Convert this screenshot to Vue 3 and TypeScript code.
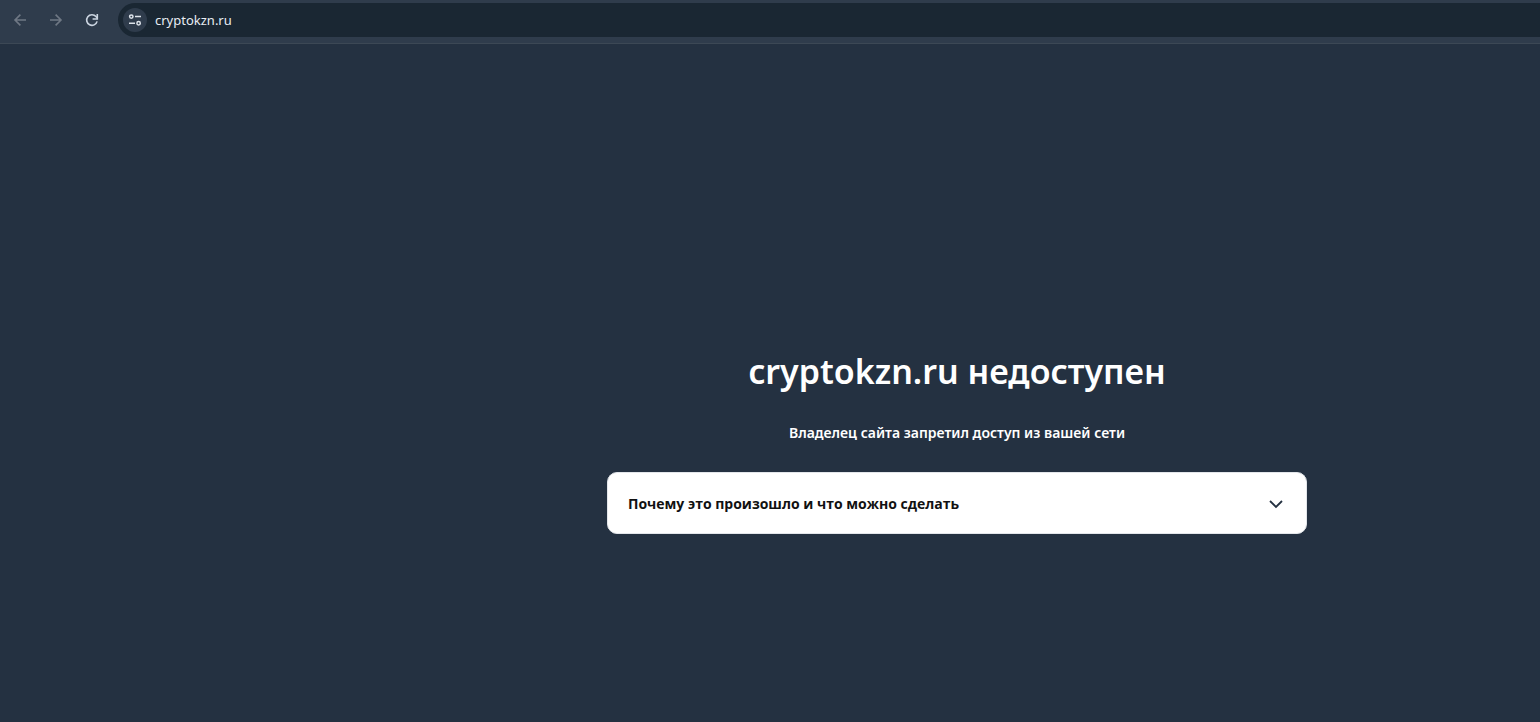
<script setup lang="ts">
import { ref } from 'vue'

const host = ref<string>('cryptokzn.ru')
</script>

<template>
  <div class="window">
    <header class="toolbar">
      <button class="nav" type="button" aria-label="Назад" disabled>
        <svg viewBox="0 0 16 16" width="16" height="16"><path d="M14 8H3.4M8.4 2.6L3 8L8.4 13.4" /></svg>
      </button>
      <button class="nav" type="button" aria-label="Вперёд" disabled>
        <svg viewBox="0 0 16 16" width="16" height="16"><path d="M2 8H12.6M7.6 2.6L13 8L7.6 13.4" /></svg>
      </button>
      <button class="nav reload" type="button" aria-label="Обновить">
        <svg viewBox="0 0 16 16" width="16" height="16">
          <path d="M13.1 9.4A5.3 5.3 0 1 1 12 4.6L13 5.8" />
          <path d="M13.3 2V7H8.6" />
        </svg>
      </button>
      <div class="address">
        <button class="site-info" type="button" aria-label="Сведения о сайте">
          <svg viewBox="0 0 16 16" width="16" height="16">
            <circle cx="4.3" cy="4.6" r="1.7" />
            <path d="M8 4.6H14M2 11.3H8" />
            <circle cx="11.6" cy="11.3" r="1.7" />
          </svg>
        </button>
        <input v-model="host" class="url" type="text" aria-label="Адрес" />
      </div>
    </header>
    <main class="page">
      <section class="notice">
        <h1>cryptokzn.ru недоступен</h1>
        <p>Владелец сайта запретил доступ из вашей сети</p>
        <button class="card" type="button" aria-expanded="false">
          <span>Почему это произошло и что можно сделать</span>
          <svg viewBox="0 0 16 16" width="16" height="16"><path d="M2 5L8 11L14 5" /></svg>
        </button>
      </section>
    </main>
  </div>
</template>

<style>
body {
  margin: 0;
  background: #243141;
}
</style>

<style scoped>
.window {
  display: flex;
  flex-direction: column;
  min-height: 100vh;
  overflow: hidden;
  background: #243141;
  font-family: "Segoe UI", "Noto Sans", "Open Sans", sans-serif;
}
button {
  margin: 0;
  padding: 0;
  border: 0;
  background: none;
  font: inherit;
}
svg {
  display: block;
  flex: none;
  fill: none;
  stroke: currentColor;
}
.toolbar {
  display: flex;
  align-items: center;
  gap: 8px;
  padding: 3px 0 6px 6px;
  border-bottom: 1px solid #3c4855;
  background: #2f3c4c;
}
.nav {
  display: flex;
  align-items: center;
  justify-content: center;
  width: 28px;
  height: 28px;
  color: #6f7884;
  stroke-width: 1.6;
}
.reload {
  color: #ccd5e1;
  stroke-width: 1.6;
}
.address {
  display: flex;
  flex: 1;
  align-items: center;
  gap: 8px;
  height: 34px;
  margin-left: 4px;
  padding-left: 5px;
  border-radius: 17px 0 0 17px;
  background: #1a2733;
}
.site-info {
  display: flex;
  align-items: center;
  justify-content: center;
  width: 24px;
  height: 24px;
  border-radius: 50%;
  background: #2f3c4c;
  color: #dde3ea;
  stroke-width: 1.5;
}
.url {
  flex: 1;
  min-width: 0;
  padding: 0;
  border: 0;
  outline: 0;
  background: none;
  color: #e8edf3;
  font-family: inherit;
  font-size: 13px;
  line-height: 20px;
}
.page {
  display: flex;
  flex: 1;
  justify-content: center;
  padding: 300px 0 0 374px;
}
.notice {
  display: flex;
  flex-direction: column;
  align-items: center;
  width: 100%;
  max-width: 700px;
}
h1 {
  margin: 0;
  color: #fff;
  font-size: 34px;
  font-weight: 600;
  line-height: 54px;
}
p {
  margin: 24px 0 28px;
  color: #fff;
  font-size: 14px;
  font-weight: 600;
  line-height: 22px;
}
.card {
  display: flex;
  align-items: center;
  justify-content: space-between;
  width: 100%;
  padding: 20px 22px 18px 20px;
  border: 1px solid #e3e6ea;
  border-radius: 10px;
  background: #fff;
  color: #111;
  font-family: "Segoe UI", "Open Sans", "Noto Sans", sans-serif;
  font-size: 14px;
  font-weight: 700;
  line-height: 22px;
}
.card svg {
  color: #243141;
  stroke-width: 1.8;
}
</style>
